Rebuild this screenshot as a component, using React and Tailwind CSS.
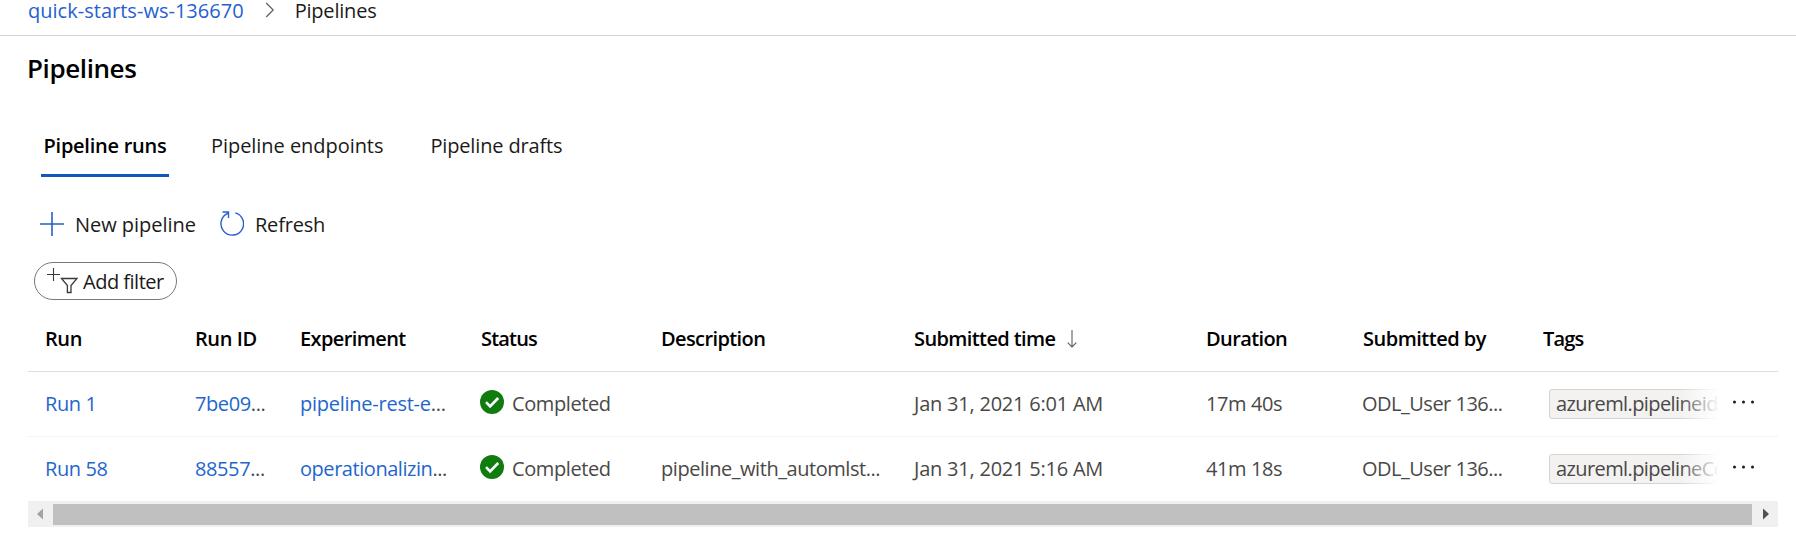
const rows = [
  {
    run: 'Run 1',
    id: '7be09',
    experiment: 'pipeline-rest-e',
    experimentTracking: 'tracking-[-0.25px]',
    description: '',
    time: 'Jan 31, 2021 6:01 AM',
    duration: '17m 40s',
    tag: 'azureml.pipelineid',
  },
  {
    run: 'Run 58',
    id: '88557',
    experiment: 'operationalizin',
    experimentTracking: 'tracking-[-0.45px]',
    description: 'pipeline_with_automlst...',
    time: 'Jan 31, 2021 5:16 AM',
    duration: '41m 18s',
    tag: 'azureml.pipelineCo',
  },
];

const grid =
  'grid grid-cols-[150px_105px_180px_180px_253px_293px_156px_180px_1fr] pl-[17px] items-center';

function CheckBadge() {
  return (
    <svg width="24" height="24" viewBox="0 0 24 24" className="shrink-0">
      <circle cx="12" cy="12" r="12" fill="#107c10" />
      <path d="M6 12.2l4.1 4.1L18.2 8" fill="none" stroke="#fff" strokeWidth="2.6" />
    </svg>
  );
}

function Row({ row, last }) {
  return (
    <div
      className={`${grid} h-[65px] border-b text-[#4a4846] ${last ? 'border-transparent' : 'border-[#f5f4f3]'}`}
    >
      <span className="text-[#1f66cc]">{row.run}</span>
      <span>
        <span className="text-[#1f66cc]">{row.id}</span>...
      </span>
      <span className={row.experimentTracking}>
        <span className="text-[#1f66cc]">{row.experiment}</span>...
      </span>
      <span className="flex items-center gap-[8px]">
        <span className="-mt-[4px]">
          <CheckBadge />
        </span>
        Completed
      </span>
      <span className="pl-px tracking-[-0.45px]">{row.description}</span>
      <span className="pl-px tracking-[-0.22px]">{row.time}</span>
      <span>{row.duration}</span>
      <span className="tracking-[-0.5px]">ODL_User 136...</span>
      <span className="flex items-center">
        <span className="relative ml-[7px] h-[30px] w-[170px] overflow-hidden">
          <span className="flex h-[30px] w-[200px] items-center rounded-[3px] border border-[#d6d4d2] bg-[#f3f2f1] pl-[6px] tracking-[-0.6px]">
            {row.tag}
          </span>
          <span className="absolute inset-y-0 right-0 w-[40px] bg-linear-to-r from-transparent to-white" />
        </span>
        <svg width="24" height="6" viewBox="0 0 24 6" className="-mt-[4px] ml-[13px]" fill="#1b1a19">
          <circle cx="2.5" cy="3" r="1.5" />
          <circle cx="11.5" cy="3" r="1.5" />
          <circle cx="20.5" cy="3" r="1.5" />
        </svg>
      </span>
    </div>
  );
}

export default function App() {
  return (
    <div className="h-[536px] w-[1796px] overflow-hidden bg-white font-['Open_Sans',sans-serif] text-[20px] leading-5 tracking-[-0.4px] whitespace-nowrap text-[#1b1a19]">
      <nav className="flex h-9 items-start border-b border-[#d6d6d6] pl-7">
        <span className="pt-px tracking-[0.02px] text-[#2460d0]">quick-starts-ws-136670</span>
        <svg width="10" height="16" viewBox="0 0 10 16" className="mt-[2px] ml-[21px]" fill="none" stroke="#605e5c" strokeWidth="1.2">
          <path d="M1.2 1l7 7-7 7" />
        </svg>
        <span className="ml-[20px] pt-px tracking-[-0.2px]">Pipelines</span>
      </nav>

      <h1 className="mt-4 ml-[27px] h-8 text-[26px] leading-8 font-semibold text-black">Pipelines</h1>

      <div className="mt-[36px] ml-[41px] flex h-[57px]">
        <div className="flex w-[128px] flex-col items-center border-b-[3px] border-[#0f59bd] pt-4 font-semibold tracking-[-0.25px] text-black">
          Pipeline runs
        </div>
        <div className="ml-[42px] pt-4 tracking-[-0.05px]">Pipeline endpoints</div>
        <div className="ml-[47px] pt-4 tracking-[-0.15px]">Pipeline drafts</div>
      </div>

      <div className="mt-[34px] ml-10 flex h-[25px] items-center">
        <svg width="24" height="24" viewBox="0 0 24 24" stroke="#2460d0" strokeWidth="1.6">
          <path d="M12 0v24M0 12h24" />
        </svg>
        <span className="ml-[11px] pt-[2px] tracking-[-0.03px]">New pipeline</span>
        <svg width="24" height="25" viewBox="0 0 24 25" className="ml-[24px]" fill="none" stroke="#2460d0" strokeWidth="1.4">
          <path d="M15.3 1.9A11.3 11.3 0 1 1 8.3 2.2M2.5 1h6v6" />
        </svg>
        <span className="ml-[11px] pt-[2px] tracking-[-0.2px]">Refresh</span>
      </div>

      <div className="mt-[26px] ml-[34px] flex h-[38px] w-[143px] items-center rounded-full border border-[#7a7876] pl-[12px]">
        <svg width="32" height="26" viewBox="0 0 32 26" fill="none" stroke="#3b3a39" strokeWidth="1.1">
          <path d="M6.5 0v13M0 6.5h13" />
          <path d="M14.5 10.5h15.5l-6 7v7h-3.6v-7z" strokeWidth="1.3" />
        </svg>
        <span className="ml-[4px] pt-[2px] tracking-[-0.5px]">Add filter</span>
      </div>

      <div className="mt-[7px] ml-7 w-[1750px]">
        <div className={`${grid} h-[65px] border-b border-[#e1dfdd] font-semibold tracking-[-0.6px] text-black`}>
          <span className="tracking-[-0.4px]">Run</span>
          <span className="tracking-[-0.4px]">Run ID</span>
          <span>Experiment</span>
          <span className="pl-px tracking-[-0.8px]">Status</span>
          <span className="pl-px">Description</span>
          <span className="flex items-center pl-px">
            Submitted time
            <svg width="10" height="18" viewBox="0 0 10 18" className="ml-[11px]" fill="none" stroke="#605e5c" strokeWidth="1.1">
              <path d="M5 0v17M.7 12.7L5 17l4.3-4.3" />
            </svg>
          </span>
          <span>Duration</span>
          <span className="pl-px tracking-[-0.5px]">Submitted by</span>
          <span className="pl-px tracking-[-0.8px]">Tags</span>
        </div>
        {rows.map((row, i) => (
          <Row key={row.run} row={row} last={i === rows.length - 1} />
        ))}
        <div className="-mt-px flex h-[26px] items-center bg-[#f0f0f0]">
          <svg width="25" height="26" viewBox="0 0 25 26" fill="#a3a3a3">
            <path d="M15 7.5v11L9 13z" />
          </svg>
          <div className="h-[21px] flex-1 bg-[#c0c0c0]" />
          <svg width="26" height="26" viewBox="0 0 26 26" fill="#505050">
            <path d="M11 7.5v11l6-5.5z" />
          </svg>
        </div>
      </div>
    </div>
  );
}
